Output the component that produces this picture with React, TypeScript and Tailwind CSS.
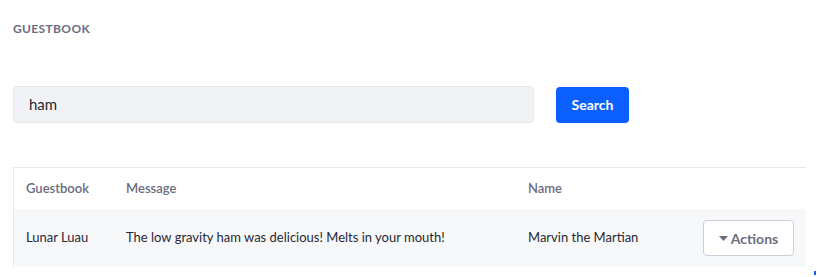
export default function App() {
  return (
    <div className="min-h-[277px] w-[817px] bg-white font-['Lato','Noto_Sans',sans-serif] text-[#272833] relative overflow-hidden">
      <div className="pl-[13px] pt-[22px]">
        <h2 className="text-[12px] font-bold uppercase tracking-[0.03em] text-[#6b6c7e] leading-[14px]">Guestbook</h2>
      </div>

      <div className="flex items-center pl-[13px] mt-[50px]">
        <div className="w-[521px] h-[37px] rounded-[4px] border border-[#e7e7ed] bg-[#f1f2f5] flex items-center px-[15px] text-[15px] text-[#272833]">
          ham
        </div>
        <button className="ml-[22px] h-[36px] w-[73px] rounded-[4px] bg-[#0b5fff] text-white text-[14px] font-bold">
          Search
        </button>
      </div>

      <div className="ml-[13px] mt-[44px] w-[793px] border-t border-l border-[#e7e7ed]">
        <table className="w-full border-collapse text-left text-[13px]">
          <thead>
            <tr className="h-[41px] text-[#6b6c7e]">
              <th className="pl-[12px] w-[100px] font-semibold">Guestbook</th>
              <th className="pl-[12px] w-[414px] font-semibold">Message</th>
              <th className="font-semibold">Name</th>
              <th className="w-[116px]"></th>
            </tr>
          </thead>
          <tbody>
            <tr className="h-[58px] bg-[#f7f8f9]">
              <td className="pl-[12px]">Lunar Luau</td>
              <td className="pl-[12px]">The low gravity ham was delicious! Melts in your mouth!</td>
              <td>Marvin the Martian</td>
              <td className="pr-[12px] text-right">
                <button className="inline-flex items-center justify-center gap-[3px] h-[36px] w-[91px] rounded-[4px] border border-[#cdced9] bg-white text-[#6b6c7e] text-[14px] font-bold">
                  <svg width="9" height="5" viewBox="0 0 9 5" className="mt-[1px]">
                    <path d="M0 0h9L4.5 5z" fill="#6b6c7e" />
                  </svg>
                  Actions
                </button>
              </td>
            </tr>
          </tbody>
        </table>
      </div>

      <div className="absolute left-[814px] top-[271px] w-[2px] h-[4px] bg-[#0b5fff]" />
    </div>
  );
}
